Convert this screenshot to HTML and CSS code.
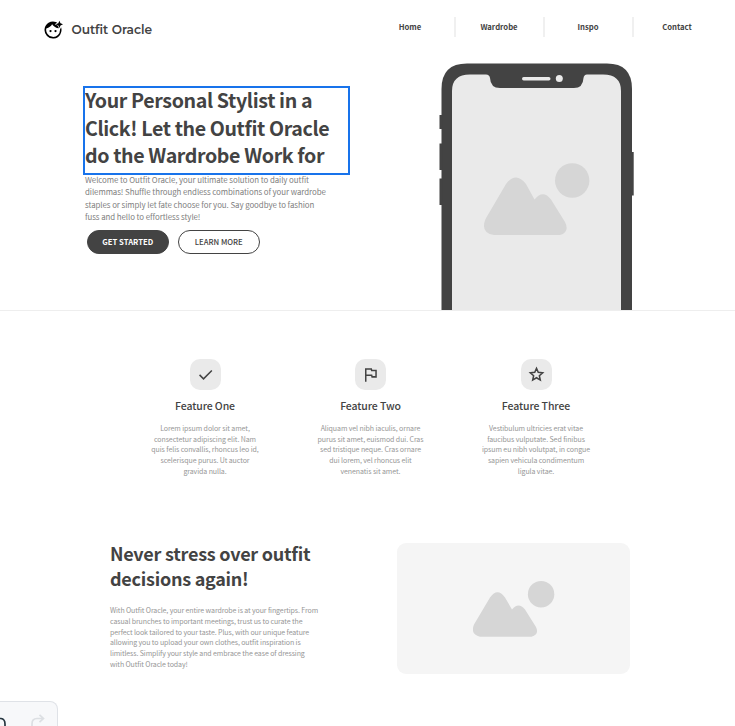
FILE: index.html
```html
<!DOCTYPE html>
<html lang="en">
<head>
<meta charset="utf-8">
<title>Outfit Oracle</title>
<link rel="stylesheet" href="styles.css">
</head>
<body>
<header class="header">
  <a class="brand">
    <svg class="brand-icon" width="20" height="20" viewBox="0 0 24 24"><path fill-rule="evenodd" d="M15.4 2.4A10.2 10.2 0 1 0 21.7 8.8L20.4 11.5A8.3 8.3 0 1 1 4 10.2C7.3 9.4 9.6 7.4 10.9 5.1C12.8 7.9 15.6 9.8 19.2 9.9L17.5 6.5L14.1 5L17 3.4Z"/><path d="M19.7.8L21 4L24 5.2L21 6.5L19.7 9.7L18.4 6.5L15.2 5.2L18.4 4Z"/><circle cx="9" cy="13.2" r="1.35"/><circle cx="15" cy="13.2" r="1.35"/></svg>
    <span class="brand-name">Outfit Oracle</span>
  </a>
  <nav class="nav">
    <a class="nav-item">Home</a>
    <a class="nav-item">Wardrobe</a>
    <a class="nav-item">Inspo</a>
    <a class="nav-item">Contact</a>
  </nav>
</header>
<section class="hero">
  <div class="hero-copy">
    <h1 class="hero-title">Your Personal Stylist in a<br>Click! Let the Outfit Oracle<br>do the Wardrobe Work for</h1>
    <p class="hero-text">Welcome to Outfit Oracle, your ultimate solution to daily outfit<br>dilemmas! Shuffle through endless combinations of your wardrobe<br>staples or simply let fate choose for you. Say goodbye to fashion<br>fuss and hello to effortless style!</p>
    <div class="actions">
      <a class="button button-dark">GET STARTED</a>
      <a class="button button-light">LEARN MORE</a>
    </div>
  </div>
  <svg class="phone" width="196" height="247" viewBox="439 63 196 247">
    <path fill="#434343" d="M441.5 310V89Q441.5 63.5 467 63.5H607Q632 63.5 632 89V310Z"/>
    <path fill="#434343" d="M439.5 115h3v14h-3zM439.5 143.500h3v26.500h-3zM439.500 178.500h3v26.500h-3zM631 152h2.700v43.500H631z"/>
    <path fill="#eaeaea" d="M452 310V91Q452 74.500 470 74.500H486Q489.500 74.500 490 78Q490.500 88 500 88H574Q583 88 583.500 78Q584 74.500 587 74.500H603Q621 74.500 621 91V310Z"/>
    <rect x="522" y="77" width="28.500" height="3.500" rx="1.700" fill="#eaeaea"/><circle cx="559.300" cy="78.500" r="3.500" fill="#eaeaea"/>
    <g fill="#d6d6d6"><circle cx="572.200" cy="180.500" r="17.200"/><path d="M485.500 219L506 184Q516 171 526 184L534.500 199.500Q543 189 551 199.500L565 222Q570 232 560 235H494Q480 233 485.500 219Z"/></g>
  </svg>
</section>
<section class="features">
  <article class="feature">
    <div class="feature-icon"><svg width="19" height="19" viewBox="0 0 24 24"><path d="M4.500 12.500L9.500 17.500L20 7"/></svg></div>
    <h2 class="feature-title">Feature One</h2>
    <p class="feature-text">Lorem ipsum dolor sit amet,<br>consectetur adipiscing elit. Nam<br>quis felis convallis, rhoncus leo id,<br>scelerisque purus. Ut auctor<br>gravida nulla.</p>
  </article>
  <article class="feature">
    <div class="feature-icon"><svg width="19" height="19" viewBox="0 0 24 24"><path d="M6 21V5H13L13.500 7H19V15H14L13.500 13H6"/></svg></div>
    <h2 class="feature-title">Feature Two</h2>
    <p class="feature-text">Aliquam vel nibh iaculis, ornare<br>purus sit amet, euismod dui. Cras<br>sed tristique neque. Cras ornare<br>dui lorem, vel rhoncus elit<br>venenatis sit amet.</p>
  </article>
  <article class="feature">
    <div class="feature-icon"><svg width="19" height="19" viewBox="0 0 24 24"><path d="M12 4.200L14.200 9.300L19.800 9.800L15.600 13.500L16.800 19L12 16.100L7.200 19L8.400 13.500L4.200 9.800L9.800 9.300Z"/></svg></div>
    <h2 class="feature-title">Feature Three</h2>
    <p class="feature-text">Vestibulum ultricies erat vitae<br>faucibus vulputate. Sed finibus<br>ipsum eu nibh volutpat, in congue<br>sapien vehicula condimentum<br>ligula vitae.</p>
  </article>
</section>
<section class="story">
  <div class="story-copy">
    <h2 class="story-title">Never stress over outfit<br>decisions again!</h2>
    <p class="story-text">With Outfit Oracle, your entire wardrobe is at your fingertips. From<br>casual brunches to important meetings, trust us to curate the<br>perfect look tailored to your taste. Plus, with our unique feature<br>allowing you to upload your own clothes, outfit inspiration is<br>limitless. Simplify your style and embrace the ease of dressing<br>with Outfit Oracle today!</p>
  </div>
  <div class="picture">
    <svg width="82" height="57" viewBox="473 580 82 57" fill="#d6d6d6"><circle cx="541.100" cy="594.200" r="13.200"/><path d="M474 624.500L490 597.500Q497.500 587 505 597.500L512 609.500Q518.500 601.500 525 609.500L536 627Q539.500 634.500 531.500 636.800H480Q470 634.500 474 624.500Z"/></svg>
  </div>
</section>
<div class="toolbar">
  <svg width="57" height="24" viewBox="0 702 57 24" fill="none" stroke-width="1.700"><path stroke="#263640" d="M-4 718.500H1Q5 719 5 724V727"/><path stroke="#dcdfe3" d="M32 727V724Q32 718.500 37 718.500H43M39.500 714.800L43.500 718.500L39.500 722.200"/></svg>
</div>
</body>
</html>
```
FILE: styles.css
```css
* { box-sizing: border-box; }
body {
  margin: 0;
  height: 726px;
  position: relative;
  overflow: hidden;
  background: #fff;
  color: #434343;
  font-family: "Noto Sans CJK SC", "Noto Sans", sans-serif;
}
h1, h2, p { margin: 0; white-space: nowrap; }
.header {
  display: flex;
  justify-content: space-between;
  height: 63px;
  padding: 17px 14px 0 43px;
}
.brand { display: flex; align-items: center; gap: 8.5px; height: 26px; }
.brand-name { font: 600 12.2px/20px "Montserrat", "Inter", sans-serif; }
.nav { display: flex; height: 20px; }
.nav-item {
  width: 89px;
  padding-right: 1px;
  text-align: center;
  font-size: 7.7px;
  font-weight: 700;
  line-height: 20px;
}
.nav-item:first-child { padding-left: 2px; }
.nav-item + .nav-item { border-left: 2px solid #f0f0f0; }
.hero {
  display: flex;
  justify-content: space-between;
  height: 248px;
  padding: 0 100px 0 85px;
  border-bottom: 1px solid #eee;
}
.hero-copy { padding-top: 25px; }
.hero-title {
  display: flow-root;
  width: 263px;
  height: 85px;
  outline: 2px solid #1873eb;
  font-size: 19.6px;
  font-weight: 700;
  line-height: 27.5px;
  letter-spacing: -.37px;
}
.hero-title::before { content: ""; display: block; margin-top: -2px; }
.hero-text { margin-top: 1px; font-size: 7.9px; line-height: 12.3px; letter-spacing: -.07px; color: #808080; }
.actions { display: flex; gap: 9.5px; padding: 7px 0 0 2px; }
.button {
  width: 81.5px;
  height: 24px;
  border: 1px solid #434343;
  border-radius: 12px;
  text-align: center;
  font-size: 7.7px;
  line-height: 21px;
}
.button-dark { background: #434343; color: #fff; font-weight: 700; }
.button-light { font-weight: 500; }
.features {
  display: grid;
  grid-template-columns: repeat(3, 165.5px);
  justify-content: center;
  height: 232px;
  padding: 48px 0 0 6px;
}
.feature { display: flex; flex-direction: column; align-items: center; text-align: center; }
.feature-icon {
  display: flex;
  align-items: center;
  justify-content: center;
  width: 31px;
  height: 31px;
  border-radius: 10px;
  background: #eaeaea;
}
.feature-icon svg { fill: none; stroke: #434343; stroke-width: 1.9; }
.feature-title { margin-top: 8px; font-size: 10.5px; font-weight: 500; line-height: 16px; letter-spacing: -.1px; }
.feature-text { margin-top: 9px; font-size: 7px; line-height: 10.7px; letter-spacing: -.08px; color: #969696; }
.story {
  display: flex;
  justify-content: space-between;
  height: 131px;
  padding: 0 105px 0 110px;
}
.story-title { margin-top: -2px; font-size: 18px; font-weight: 700; line-height: 25px; letter-spacing: -.25px; }
.story-text { margin-top: 14px; font-size: 7px; line-height: 10.8px; letter-spacing: -.1px; color: #969696; }
.picture {
  display: flex;
  width: 233px;
  height: 131px;
  padding: 37px 0 0 76px;
  border-radius: 9px;
  background: #f5f5f5;
}
.toolbar {
  position: absolute;
  left: 0;
  top: 701px;
  width: 58px;
  height: 34px;
  border: 1px solid #dfe2e7;
  border-left: 0;
  border-radius: 0 8px 0 0;
  background: #f7f8fa;
}
```
